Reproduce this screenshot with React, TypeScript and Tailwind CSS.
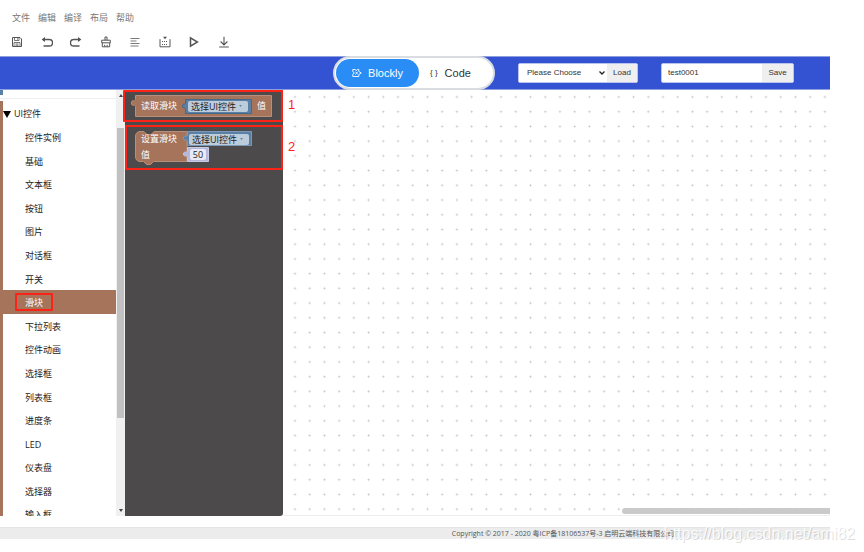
import { useState } from 'react';
import type { ReactNode } from 'react';

const MENUS = ['文件', '编辑', '编译', '布局', '帮助'];

const CATEGORIES = [
  '控件实例',
  '基础',
  '文本框',
  '按钮',
  '图片',
  '对话框',
  '开关',
  '滑块',
  '下拉列表',
  '控件动画',
  '选择框',
  '列表框',
  '进度条',
  'LED',
  '仪表盘',
  '选择器',
  '输入框',
];

const TOOLS: { label: string; icon: ReactNode }[] = [
  {
    label: '保存',
    icon: (
      <>
        <path d="M1.5 1.500h7.500l1.500 1.500v7.500h-9z" />
        <path d="M3.500 1.500v3h4.500v-3M6.500 2.300v1.300M3 10.500V6.500h6v4M4.500 8h3M4.500 9.300h3" strokeWidth="0.8" />
      </>
    ),
  },
  {
    label: '撤销',
    icon: (
      <>
        <path d="M2 3.500h6.300a2.900 2.900 0 0 1 0 6.500H2.500" strokeWidth="1.4" />
        <path d="M.6 3.500 4 .9v5.200z" fill="currentColor" stroke="none" />
      </>
    ),
  },
  {
    label: '重做',
    icon: (
      <>
        <path d="M10 3.500H3.700a2.900 2.900 0 0 0 0 6.500h5.800" strokeWidth="1.4" />
        <path d="M11.400 3.500 8 .9v5.200z" fill="currentColor" stroke="none" />
      </>
    ),
  },
  {
    label: '清理',
    icon: <path d="M5 4.200V1h2v3.200M1.700 6.800V4.200h8.600v2.600zM2.300 6.800v4h7.400v-4M4.700 10.800V8.800M7.200 10.800V8.800" />,
  },
  { label: '对齐', icon: <path d="M1.500 2.500h9M1.500 5h6M1.500 7.500h9M1.500 10h8" strokeWidth="0.8" /> },
  {
    label: '编译',
    icon: (
      <>
        <path d="M1 3.200v7.600h10V3.200" />
        <path d="M3 5.500h6M3 8.500h6" strokeDasharray="1 1" />
        <path d="M4 0.700h4L6 3.200z" fill="currentColor" stroke="none" />
      </>
    ),
  },
  { label: '运行', icon: <path d="M2.500 1.800v8.400L9.400 6z" strokeWidth="1.5" /> },
  { label: '下载', icon: <path d="M6 0.800v8M2.600 5.500 6 8.900l3.400-3.400M1.200 11h9.600" strokeWidth="1.1" /> },
];

function ComponentField() {
  return (
    <button
      type="button"
      aria-haspopup="listbox"
      className="flex h-[11px] w-[60px] items-center justify-between rounded-[2px] bg-[#bdccdb] pl-[3px] pr-[6px] text-[9px] leading-[11px] text-[#222]"
    >
      <span>选择UI控件</span>
      <svg viewBox="0 0 4 3" className="h-[2px] w-[3px] fill-[#5b80a5]">
        <path d="M0 0h4L2 3z" />
      </svg>
    </button>
  );
}

function GetSliderBlock() {
  return (
    <div className="relative h-[22px] w-[141px] text-[9px] leading-[22px] text-white">
      <svg viewBox="0 0 141 22" className="absolute inset-0 size-full">
        <path d="M4.500.5h136v21h-136V11.500c0-3-4 1-4-3.500s4-.5 4-3.500z" fill="#a5745b" stroke="#b78f7b" />
        <path d="M54.500 4.500h66v14h-66v-4c0-3-3 0-3-3.500s3-.5 3-3z" fill="#5b80a5" stroke="#47688b" />
      </svg>
      <div className="relative flex items-center pl-[10px]">
        <span className="w-[47px]">读取滑块</span>
        <ComponentField />
        <span className="pl-[9px]">值</span>
      </div>
    </div>
  );
}

function SetSliderBlock() {
  return (
    <div className="relative h-[34px] w-[118px] text-[9px] text-white">
      <svg viewBox="0 0 118 34" className="absolute inset-0 size-full">
        <path
          d="M.5 5a4.500 4.500 0 0 1 4.500-4.500h4l3 3h4l3-3h33v30H18.500l-3 3h-4l-3-3H5A4.500 4.500 0 0 1 .5 26z"
          fill="#a5745b"
          stroke="#b78f7b"
        />
        <path d="M52.500.5h64v14h-64v-4c0-3-4 0-4-3.500s4-.5 4-3z" fill="#5b80a5" stroke="#7b99b7" />
        <path d="M52.500 16.500h21v14h-21v-4c0-3-4 0-4-3.500s4-.5 4-3z" fill="#b4b9dc" stroke="#c6cae4" />
      </svg>
      <div className="relative flex h-4 items-center pl-[6px]">
        <span className="w-[48px]">设置滑块</span>
        <ComponentField />
      </div>
      <label className="relative flex h-[15px] items-center pl-[6px]">
        <span className="w-[49px]">值</span>
        <input
          defaultValue="50"
          className="h-[11px] w-4 rounded-[2px] bg-[#e9eaf5] text-center text-[9px] text-[#222] outline-none"
        />
      </label>
    </div>
  );
}

function Canvas() {
  return (
    <section className="relative min-w-0 flex-1 border-b border-[#eee]">
      <svg className="absolute inset-0 size-full">
        <defs>
          <pattern id="dots" x="4.600" y="-0.400" width="14.720" height="14.720" patternUnits="userSpaceOnUse">
            <path d="M7.400 6.400v2M6.400 7.400h2" stroke="#c0c0c0" strokeWidth="0.900" />
          </pattern>
        </defs>
        <rect width="100%" height="100%" fill="url(#dots)" />
      </svg>
      <span className="absolute left-[5px] top-[7px] text-[13px] leading-4 text-[#f22]">1</span>
      <span className="absolute left-[5px] top-[49px] text-[13px] leading-4 text-[#f22]">2</span>
      <div className="absolute bottom-px right-0 h-[6px] w-[38%] rounded-l-full bg-[#cacaca]" />
    </section>
  );
}

export default function App() {
  const [mode, setMode] = useState('blockly');
  const [active, setActive] = useState('滑块');

  return (
    <div className="flex h-screen flex-col bg-white pb-[13px] font-['Liberation_Sans','Noto_Sans_CJK_SC',sans-serif] text-[#333]">
      <div className="mr-[34px] flex min-h-0 flex-1 flex-col">
        <nav className="flex gap-2 pl-3 pt-3 text-[9px] leading-[13px] text-[#777]">
          {MENUS.map((menu) => (
            <button key={menu} type="button">
              {menu}
            </button>
          ))}
        </nav>
        <div className="ml-[11px] flex h-[31px] w-[219px] items-center justify-between pt-[3px] text-[#555]">
          {TOOLS.map((tool) => (
            <button key={tool.label} type="button" aria-label={tool.label}>
              <svg viewBox="0 0 12 12" className="size-3" fill="none" stroke="currentColor" strokeWidth="1">
                {tool.icon}
              </svg>
            </button>
          ))}
        </div>

        <header className="flex h-[34px] shrink-0 items-center justify-center border-y border-[#8e9fe0] bg-[#3453d2] pl-[297px]">
          <div className="flex h-[34px] w-[162px] shrink-0 rounded-full border-2 border-[#d9dce0] bg-white p-px text-[11px]">
            <button
              type="button"
              onClick={() => setMode('blockly')}
              className={`flex w-[83px] items-center justify-center gap-[6px] rounded-full ${mode === 'blockly' ? 'bg-[#2a8df6] text-white' : ''}`}
            >
              <svg viewBox="0 0 10 10" className="size-[10px]" fill="none" stroke="currentColor" strokeWidth="0.900">
                <path d="M.8 1.500h2.500l1 1.200 1-1.200h1.500v2l2.500 1.500-2.500 1.500v2H.8V6.300L2.300 5 .8 3.700zM3.500 4l2.200 2M5.500 3.800 3.500 6.500" />
              </svg>
              Blockly
            </button>
            <button
              type="button"
              onClick={() => setMode('code')}
              className={`flex flex-1 items-center gap-[7px] rounded-full pl-[11px] ${mode === 'code' ? 'bg-[#2a8df6] text-white' : ''}`}
            >
              <span className="text-[8px]">{'{ }'}</span>
              Code
            </button>
          </div>
          <div className="ml-[23px] flex h-5 w-[120px] shrink-0 overflow-hidden rounded-[2px] border border-[#b9c3ee] bg-white text-[8px]">
            <div className="relative min-w-0 flex-1">
              <select aria-label="Project" className="size-full appearance-none bg-white pl-2 outline-none">
                <option>Please Choose</option>
              </select>
              <svg
                viewBox="0 0 6 4"
                className="pointer-events-none absolute right-[2px] top-[7px] h-1 w-[6px]"
                fill="none"
                stroke="#222"
                strokeWidth="1.300"
              >
                <path d="M.5.5 3 3 5.500.5" />
              </svg>
            </div>
            <button type="button" className="w-[30px] bg-[#efefef]">
              Load
            </button>
          </div>
          <div className="ml-[23px] flex h-5 w-[133px] shrink-0 overflow-hidden rounded-[2px] border border-[#b9c3ee] bg-white text-[8px]">
            <input aria-label="Project name" defaultValue="test0001" className="min-w-0 flex-1 pl-[6px] outline-none" />
            <button type="button" className="w-[31px] bg-[#efefef]">
              Save
            </button>
          </div>
        </header>

        <main className="flex min-h-0 flex-1">
          <aside className="w-[116px] shrink-0 overflow-hidden font-['Open_Sans','Noto_Sans_CJK_SC',sans-serif] text-[9px] text-[#222]">
            <div className="h-[9px] border-b border-[#eee]">
              <div className="h-[5px] w-[3px] bg-[#5b80a5]" />
            </div>
            <div className="mt-[2px] border-l-[3px] border-[#a5745b]">
              <button type="button" className="flex h-6 items-center gap-[3px] pt-[2px]">
                <svg viewBox="0 0 8 7" className="h-[7px] w-2 fill-black">
                  <path d="M0 0h8L4 7z" />
                </svg>
                UI控件
              </button>
              <ul className="grid h-[401px] auto-rows-fr">
                {CATEGORIES.map((name) => (
                  <li key={name} className={name === active ? 'bg-[#a5745b] text-white' : ''}>
                    <button
                      type="button"
                      onClick={() => setActive(name)}
                      className="relative flex size-full items-center pl-[22px] pt-[2px] text-left"
                    >
                      {name}
                      {name === '滑块' && <span className="absolute inset-y-[3px] left-3 w-[38px] rounded-[1px] border-2 border-[#fb2318]" />}
                    </button>
                  </li>
                ))}
              </ul>
            </div>
          </aside>

          <div className="flex w-[9px] shrink-0 flex-col items-center bg-[#f0f0f0] py-1">
            <svg viewBox="0 0 4 3" className="h-[3px] w-1 fill-[#444]">
              <path d="M0 3h4L2 0z" />
            </svg>
            <div className="mt-[31px] h-[290px] w-[7px] bg-[#c1c1c1]" />
            <svg viewBox="0 0 4 3" className="mt-auto h-[3px] w-1 fill-[#444]">
              <path d="M0 0h4L2 3z" />
            </svg>
          </div>

          <div className="w-[158px] shrink-0 rounded-br-[3px] bg-[#4c4a4a] font-['Open_Sans','Noto_Sans_CJK_SC',sans-serif]">
            <div className="-ml-[2px] h-8 rounded-[1px] border-2 border-[#fb2318] pl-[6px] pt-[3px]">
              <GetSliderBlock />
            </div>
            <div className="mt-[3px] h-[45px] rounded-[1px] border-2 border-[#fb2318] pl-2 pt-1">
              <SetSliderBlock />
            </div>
          </div>

          <Canvas />
        </main>

        <footer className="relative mt-[11px] h-3 shrink-0 border-t border-[#e4e4e4] bg-[#ececec] pl-[296px] text-center font-['Open_Sans','Noto_Sans_CJK_SC',sans-serif] text-[7px] leading-[12px] text-[#555]">
          Copyright © 2017 - 2020 粤ICP备18106537号-3 启明云端科技有限公司
          <span className="absolute -right-[25px] -top-[3px] whitespace-nowrap font-['Liberation_Sans',sans-serif] text-[16px] leading-[18px] text-white/80 [text-shadow:1px_1px_0_#00000026]">
            https://blog.csdn.net/ami82
          </span>
        </footer>
      </div>
    </div>
  );
}
